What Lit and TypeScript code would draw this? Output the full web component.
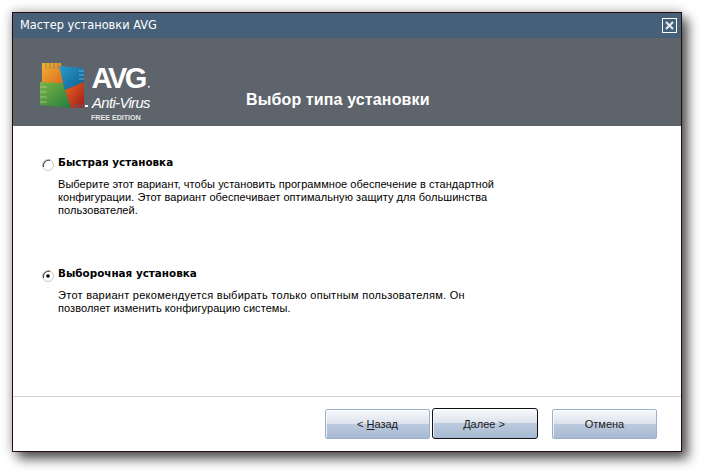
import { LitElement, html, css, svg } from "lit";
import { customElement } from "lit/decorators.js";

@customElement("app-root")
export class AppRoot extends LitElement {
  static styles = css`
    :host { display: block; width: 701px; height: 471px; background: #fff; overflow: hidden; font-family: "Liberation Sans", Arial, sans-serif; font-size: 11px; color: #000; }
    * { box-sizing: border-box; }
    .page { padding: 12px 0 0 12px; }
    .win { width: 670px; height: 440px; border: 1px solid #2a0b0b; background: #fff; display: flex; flex-direction: column; box-shadow: 6px 7px 11px rgba(0,0,0,.66), -1px -1px 10px rgba(0,0,0,.25); }
    .title { height: 25px; flex: none; background: #466079; color: #fff; display: flex; align-items: center; justify-content: space-between; padding: 0 4px 1px 7px; font-family: "DejaVu Sans", sans-serif; font-size: 11.4px; }
    .close { width: 15px; height: 15px; border: 1px solid #fff; display: flex; align-items: center; justify-content: center; margin-top: 1px; }
    .head { height: 88px; flex: none; background: #5e646c; display: flex; align-items: flex-start; }
    .logo { flex: none; margin: 22px 0 0 27px; width: 122px; height: 64px; display: block; }
    .h1 { color: #fff; font-weight: 700; font-size: 16px; line-height: 18px; letter-spacing: .13px; margin: 53px 0 0 84px; font-family: "Liberation Sans", sans-serif; }
    .body { flex: 1; padding: 30px 0 0 29px; display: flex; flex-direction: column; }
    .opt { display: grid; grid-template-columns: 16px 1fr; }
    .opt.second { margin-top: 50px; }
    .radio { width: 12px; height: 12px; margin-top: 3px; display: block; }
    .name { font-weight: 700; line-height: 13px; font-family: "DejaVu Sans", sans-serif; font-size: 10.4px; }
    .desc { grid-column: 2; margin-top: 7px; line-height: 13px; letter-spacing: .06px; font-size: 11px; font-family: "Liberation Sans", sans-serif; white-space: pre-line; width: 480px; }
    .wide { letter-spacing: .28px; }
    .foot { height: 55px; flex: none; border-top: 1px solid #d0d0d0; display: flex; padding: 12px 0 0 312px; }
    .btn { width: 105px; height: 30px; border: 1px solid #9db0ca; border-radius: 2px; background: linear-gradient(#f7f9fb 0, #dde3ec 48%, #bccadd 50%, #a7b9d3 100%); display: flex; align-items: center; justify-content: center; font: 11px "Liberation Sans", sans-serif; color: #1a1a1a; box-shadow: inset 1px 1px 0 rgba(255,255,255,.7); }
    .btn.def { width: 106px; border: 1px solid #111; border-radius: 3px; margin: -1px 14px 0 2px; height: 31px; padding-right: 2px; }
    u { text-underline-offset: 1px; }
  `;

  private logo() {
    return svg`<svg class="logo" viewBox="0 0 122 64" aria-hidden="true">
      <defs>
        <linearGradient id="o" x1="0" y1="0" x2="1" y2="1"><stop offset="0" stop-color="#f2b531"/><stop offset="1" stop-color="#dc6a1f"/></linearGradient>
        <linearGradient id="b" x1="0" y1="0" x2="1" y2="1"><stop offset="0" stop-color="#2a9cc6"/><stop offset="1" stop-color="#0b5c94"/></linearGradient>
        <linearGradient id="g" x1="0" y1="0" x2="1" y2="1"><stop offset="0" stop-color="#7fb443"/><stop offset="1" stop-color="#1f7d3e"/></linearGradient>
        <linearGradient id="r" x1="0" y1="0" x2="1" y2="1"><stop offset="0" stop-color="#e6691f"/><stop offset="1" stop-color="#a3191c"/></linearGradient>
      </defs>
      <path d="M2 3h19l3 20H2z" fill="url(#o)"/>
      <path d="M6 3v6M10 3v6M14 3v6M18 3v6" stroke="#5e646c" stroke-width="1" opacity=".55"/>
      <path d="M0 22l23 1 8 25-31-3z" fill="url(#g)"/>
      <path d="M0 27h7M0 32h7M0 37h7M0 42h7" stroke="#c9d3b8" stroke-width="1" opacity=".6"/>
      <path d="M19 6l25 2v14l-19 8z" fill="url(#b)"/>
      <path d="M39 11h5M39 15h5M39 19h5" stroke="#b8d3dd" stroke-width="1" opacity=".6"/>
      <path d="M25 30l19-8v26H31z" fill="url(#r)"/>
      <path d="M34 44v4M37 44v4M40 44v4M43 44v4" stroke="#5e646c" stroke-width="1"/>
      <rect x="45" y="45" width="3" height="2" fill="#fff"/>
      <text x="51.5" y="28" fill="#fff" font-family="Liberation Sans" font-weight="700" font-size="29" letter-spacing="-2.4">AVG</text>
      <rect x="108" y="26" width="1.6" height="1.6" fill="#fff"/>
      <text x="52" y="48" fill="#fff" font-family="Liberation Sans" font-style="italic" font-size="14.8" letter-spacing="-.6">Anti-Virus</text>
      <text x="51" y="59.5" fill="#e4e4e4" font-family="Liberation Sans" font-weight="700" font-size="7.2" letter-spacing="-.05">FREE EDITION</text>
    </svg>`;
  }

  private radio(on: boolean) {
    return svg`<svg class="radio" viewBox="0 0 12 12" aria-hidden="true">
      <circle cx="6" cy="6" r="5.5" fill="#fff" stroke="#c9c9c9"/>
      <path d="M1.4 8A5.5 5.5 0 0 1 8 1.4" fill="none" stroke="#4a4a4a" stroke-width="1.1"/>
      ${on ? svg`<circle cx="6" cy="6" r="1.8" fill="#000"/>` : ""}
    </svg>`;
  }

  render() {
    return html`<div class="page"><div class="win">
      <div class="title"><span>Мастер установки AVG</span>
        <span class="close"><svg width="9" height="9" viewBox="0 0 9 9" aria-hidden="true"><path d="M1 1l7 7M8 1L1 8" stroke="#e6ecf1" stroke-width="2"/></svg></span></div>
      <div class="head">${this.logo()}<div class="h1">Выбор типа установки</div></div>
      <div class="body">
        <div class="opt">${this.radio(false)}<div class="name">Быстрая установка</div>
          <div class="desc">Выберите этот вариант, чтобы установить программное обеспечение в стандартной
конфигурации. Этот вариант обеспечивает оптимальную защиту для большинства
пользователей.</div></div>
        <div class="opt second">${this.radio(true)}<div class="name">Выборочная установка</div>
          <div class="desc"><span class="wide">Этот вариант рекомендуется выбирать только опытным пользователям. Он</span>
позволяет изменить конфигурацию системы.</div></div>
      </div>
      <div class="foot">
        <div class="btn">&lt;&nbsp;<u>Н</u>азад</div>
        <div class="btn def"><u>Д</u>алее&nbsp;&gt;</div>
        <div class="btn">Отмена</div>
      </div>
    </div></div>`;
  }
}
